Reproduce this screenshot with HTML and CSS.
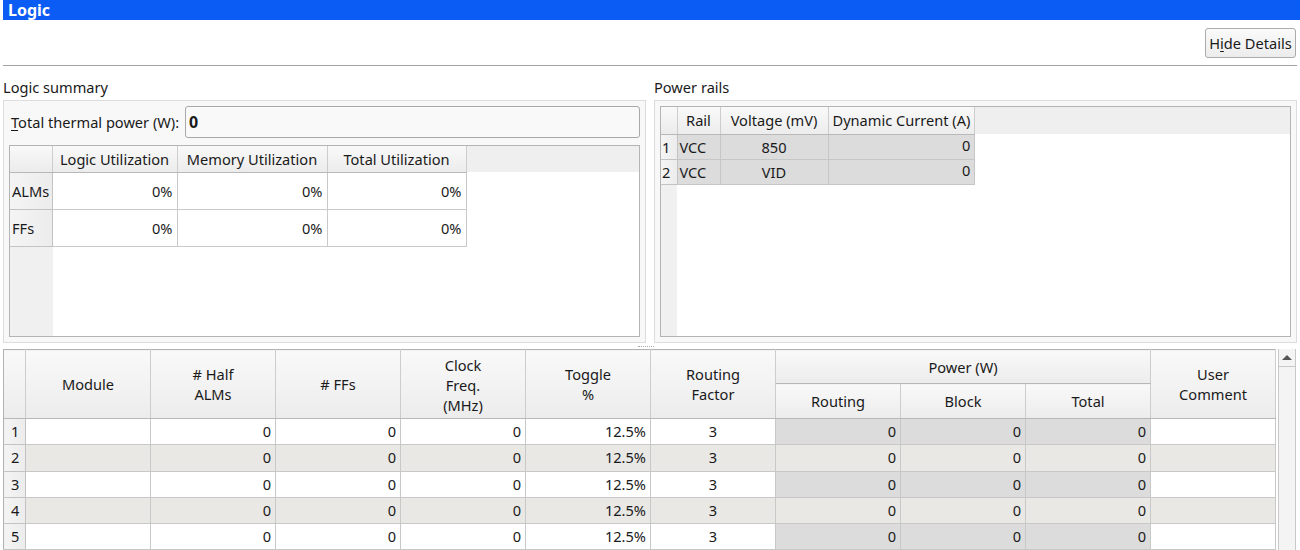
FILE: index.html
```html
<!DOCTYPE html>
<html lang="en">
<head>
    <meta charset="UTF-8">
    <title>Logic</title>
    <link rel="stylesheet" href="styles.css">
</head>
<body>
    <div class="title-bar">Logic</div>

    <div class="toolbar">
        <button class="btn">H<u>i</u>de Details</button>
    </div>

    <div class="panes">
        <div class="pane">
            <div class="pane-label">Logic summary</div>
            <div class="panel">
                <div class="field-row">
                    <label class="field-label"><u>T</u>otal thermal power (W):</label>
                    <div class="field-value">0</div>
                </div>
                <div class="grid-box summary-box">
                    <table class="grid summary">
                        <colgroup>
                            <col class="c0"><col class="c1"><col class="c2"><col class="c3">
                        </colgroup>
                        <tr class="head">
                            <th></th>
                            <th>Logic Utilization</th>
                            <th>Memory Utilization</th>
                            <th>Total Utilization</th>
                        </tr>
                        <tr>
                            <th class="rh">ALMs</th>
                            <td>0%</td>
                            <td>0%</td>
                            <td>0%</td>
                        </tr>
                        <tr>
                            <th class="rh">FFs</th>
                            <td>0%</td>
                            <td>0%</td>
                            <td>0%</td>
                        </tr>
                    </table>
                </div>
            </div>
        </div>

        <div class="pane">
            <div class="pane-label">Power rails</div>
            <div class="panel">
                <div class="grid-box rails-box">
                    <table class="grid rails">
                        <colgroup>
                            <col class="r0"><col class="r1"><col class="r2"><col class="r3">
                        </colgroup>
                        <tr class="head">
                            <th></th>
                            <th>Rail</th>
                            <th>Voltage (mV)</th>
                            <th>Dynamic Current (A)</th>
                        </tr>
                        <tr>
                            <th class="rh">1</th>
                            <td class="left">VCC</td>
                            <td class="center">850</td>
                            <td class="top">0</td>
                        </tr>
                        <tr>
                            <th class="rh">2</th>
                            <td class="left">VCC</td>
                            <td class="center">VID</td>
                            <td class="top">0</td>
                        </tr>
                    </table>
                </div>
            </div>
        </div>
    </div>

    <div class="splitter"><span class="dots"></span></div>

    <div class="modules">
        <table class="grid module-table">
            <colgroup>
                <col class="m0">
                <col class="mc"><col class="mc"><col class="mc"><col class="mc"><col class="mc">
                <col class="mc"><col class="mc"><col class="mc"><col class="mc"><col class="mc">
            </colgroup>
            <tr class="head">
                <th rowspan="2"></th>
                <th rowspan="2">Module</th>
                <th rowspan="2"># Half<br>ALMs</th>
                <th rowspan="2"># FFs</th>
                <th rowspan="2" class="tight">Clock<br>Freq.<br>(MHz)</th>
                <th rowspan="2">Toggle<br>%</th>
                <th rowspan="2">Routing<br>Factor</th>
                <th colspan="3" class="group">Power (W)</th>
                <th rowspan="2">User<br>Comment</th>
            </tr>
            <tr class="head sub">
                <th>Routing</th>
                <th>Block</th>
                <th>Total</th>
            </tr>
            <tr>
                <th class="rh">1</th>
                <td></td><td>0</td><td>0</td><td>0</td><td>12.5%</td><td class="center">3</td>
                <td class="pw">0</td><td class="pw">0</td><td class="pw">0</td><td></td>
            </tr>
            <tr class="alt">
                <th class="rh">2</th>
                <td></td><td>0</td><td>0</td><td>0</td><td>12.5%</td><td class="center">3</td>
                <td class="pw">0</td><td class="pw">0</td><td class="pw">0</td><td></td>
            </tr>
            <tr>
                <th class="rh">3</th>
                <td></td><td>0</td><td>0</td><td>0</td><td>12.5%</td><td class="center">3</td>
                <td class="pw">0</td><td class="pw">0</td><td class="pw">0</td><td></td>
            </tr>
            <tr class="alt">
                <th class="rh">4</th>
                <td></td><td>0</td><td>0</td><td>0</td><td>12.5%</td><td class="center">3</td>
                <td class="pw">0</td><td class="pw">0</td><td class="pw">0</td><td></td>
            </tr>
            <tr>
                <th class="rh">5</th>
                <td></td><td>0</td><td>0</td><td>0</td><td>12.5%</td><td class="center">3</td>
                <td class="pw">0</td><td class="pw">0</td><td class="pw">0</td><td></td>
            </tr>
        </table>
        <div class="scrollbar">
            <div class="scroll-up"><span class="arrow"></span></div>
        </div>
    </div>
</body>
</html>
```

FILE: styles.css
```css
html, body {
    height: 550px;
    overflow: hidden;
}
body {
    margin: 0;
    padding: 0 3px 0 3px;
    font-family: "Noto Sans", "Open Sans", sans-serif;
    font-size: 14.6px;
    color: #1a1a1a;
    background-color: white;
}

/* title + toolbar */
.title-bar {
    height: 20px;
    margin-right: -3px;
    background-color: #0a5cf5;
    color: white;
    font-weight: bold;
    font-size: 16px;
    line-height: 20px;
    padding-left: 5px;
}
.toolbar {
    height: 46px;
    display: flex;
    justify-content: flex-end;
    align-items: flex-start;
    padding-top: 8px;
    box-sizing: border-box;
    border-bottom: 1px solid #a3a3a3;
}
.btn {
    height: 30px;
    width: 91px;
    margin-right: 1px;
    padding: 0;
    font-family: inherit;
    font-size: 14.6px;
    color: #1a1a1a;
    background: linear-gradient(#fafafa, #ececec);
    border: 1px solid #ababab;
    border-radius: 3px;
}
.btn u, .field-label u {
    text-decoration-thickness: 1px;
    text-underline-offset: 2px;
}

/* upper panes */
.panes {
    display: flex;
    gap: 8px;
}
.pane {
    flex: 1;
    display: flex;
    flex-direction: column;
}
.pane-label {
    height: 34px;
    padding-top: 11px;
    box-sizing: border-box;
    line-height: 20px;
}
.panel {
    height: 243px;
    box-sizing: border-box;
    border: 1px solid #dcdcdc;
    background-color: #f8f8f8;
    padding: 5px;
    display: flex;
    flex-direction: column;
    gap: 7px;
}
.field-row {
    display: flex;
    align-items: center;
    height: 32px;
}
.field-label {
    width: 174px;
    padding-left: 2px;
}
.field-value {
    flex: 1;
    height: 32px;
    box-sizing: border-box;
    border: 1px solid #a8a8a8;
    border-radius: 3px;
    background-color: #f9f9f9;
    font-weight: bold;
    font-size: 16px;
    line-height: 30px;
    padding-left: 3px;
}

/* grid tables */
.grid-box {
    flex: 1;
    border: 1px solid #b4b4b4;
    background-color: white;
}
.grid {
    border-collapse: collapse;
    table-layout: fixed;
}
.grid th, .grid td {
    padding: 0 4px;
    font-weight: normal;
    white-space: nowrap;
    line-height: 20px;
}
.grid td {
    text-align: right;
    border: 1px solid #c9c9c9;
}
.grid .head th {
    background: linear-gradient(#f9f9f9, #ececec);
    border-right: 1px solid #cdcdcd;
    border-bottom: 1px solid #b8b8b8;
    text-align: center;
}
.grid .rh {
    text-align: left;
    padding: 0 2px;
    background: linear-gradient(to right, #f4f4f4, #ececec);
    border-bottom: 1px solid #c3c3c3;
    border-right: 1px solid #c3c3c3;
}
.grid .left { text-align: left; padding-left: 2px; }
.grid .center { text-align: center; }
.grid tr > :first-child { border-left: none; }
.grid tr.head:first-child > * { border-top: none; }

.summary-box {
    background:
        linear-gradient(#efefef, #efefef) top left / 100% 26px no-repeat,
        linear-gradient(to right, #f0f0f0 43px, white 43px);
}
.summary .c0 { width: 42px; }
.summary .c1 { width: 125px; }
.summary .c2 { width: 150px; }
.summary .c3 { width: 139px; }
.summary tr.head { height: 26px; }
.summary tr:not(.head) { height: 37px; }

.rails-box {
    background:
        linear-gradient(#efefef, #efefef) top left / 100% 27px no-repeat,
        linear-gradient(to right, #f0f0f0 16px, white 16px);
}
.rails .r0 { width: 16px; }
.rails .r1 { width: 43px; }
.rails .r2 { width: 108px; }
.rails .r3 { width: 144px; }
.rails tr.head { height: 27px; }
.rails tr:not(.head) { height: 25px; }
.rails td {
    background-color: #dcdcdc;
    border-color: #c6c6c6;
    padding-top: 0;
}
.rails td.top { vertical-align: top; padding-top: 0; }
.rails .rh { padding: 1px 1px 0; }

/* splitter */
.splitter {
    height: 6px;
    display: flex;
    justify-content: center;
    align-items: center;
    padding-right: 8px;
}
.dots {
    width: 16px;
    border-top: 1px dotted #a8a8a8;
}

/* module table */
.modules {
    display: flex;
    gap: 2px;
}
.module-table {
    width: 1273px;
    border: 1px solid #b2b2b2;
    border-bottom: none;
}
.module-table .m0 { width: 22px; }
.module-table .mc { width: 125px; }
.module-table tr.head:first-child { height: 34px; }
.module-table tr.head.sub { height: 35px; }
.module-table .tight { line-height: 20px; padding-top: 1px; }
.module-table .group { border-bottom: 1px solid #cdcdcd; }
.module-table tr:not(.head) { height: 26px; }
.module-table tr:not(.head) > * {
    padding-top: 2px;
    padding-bottom: 0;
    vertical-align: top;
}
.module-table .rh { padding-left: 7px; padding-top: 4px; }
.module-table .center { padding-top: 4px; }
.module-table td { border-color: #c8c8c8; }
.module-table tr.alt td { background-color: #e9e8e5; }
.module-table td.pw { background-color: #dcdcdc; }

.scrollbar {
    width: 18px;
    height: 201px;
    box-sizing: border-box;
    border-left: 1px solid #c8c8c8;
    border-right: 1px solid #c8c8c8;
    background-color: #f4f4f4;
}
.scroll-up {
    height: 17px;
    border-bottom: 1px solid #c8c8c8;
    display: flex;
    justify-content: center;
    align-items: center;
}
.arrow {
    width: 0;
    height: 0;
    border-left: 5px solid transparent;
    border-right: 5px solid transparent;
    border-bottom: 5px solid #555;
}
```
